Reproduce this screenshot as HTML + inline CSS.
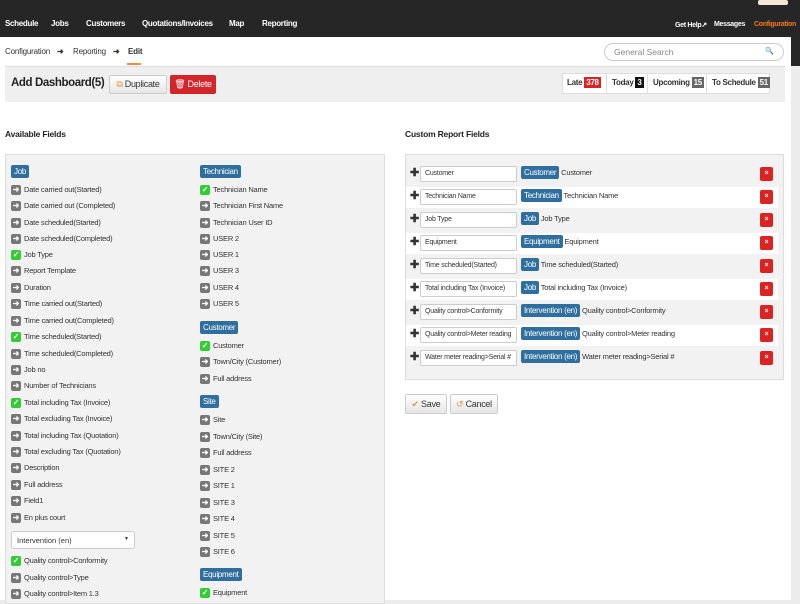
<!DOCTYPE html>
<html><head><style>
*{box-sizing:border-box;margin:0;padding:0}
body{width:800px;height:600px;overflow:hidden;background:#ececec;font-family:"Liberation Sans",sans-serif;position:relative}
.a{position:absolute}
#top{left:0;top:0;width:800px;height:66px;background:#262626}
#page{left:0;top:37px;width:791px;height:563px;background:#fff}
.nav{color:#fff;font-weight:bold;font-size:8px;top:19px;letter-spacing:-0.3px}
.bc{font-size:8px;color:#333;top:47px;letter-spacing:-0.2px}
.lbl{background:#2f6f9f;color:#fff;font-size:8px;padding:2px 3px;border-radius:2px;line-height:9px;letter-spacing:-0.3px}
.it{font-size:7.5px;color:#333;line-height:11px;white-space:nowrap;letter-spacing:-0.2px}
.ic{display:inline-block;width:10px;height:10px;border-radius:2px;background:#777;color:#fff;font-size:8px;line-height:10px;text-align:center;vertical-align:middle;margin-right:3px;font-weight:bold}
.ck{background:#3c3}
.row{left:406px;width:372px;height:21px}
.inp{position:absolute;left:14px;top:2px;width:97px;height:16px;background:#fff;border:1px solid #ccc;border-radius:2px;font-size:7px;color:#333;padding-left:4px;line-height:14px;white-space:nowrap;overflow:hidden;letter-spacing:-0.2px}
.x{position:absolute;left:354px;top:3px;width:13px;height:14px;background:#d22;border-radius:2px;color:#fff;font-size:7px;text-align:center;line-height:14px;font-weight:bold}
.pl{position:absolute;left:4px;top:3px;font-size:11px;font-weight:bold;color:#333;line-height:13px}
.rl{position:absolute;left:115px;top:4px;font-size:7.5px;color:#333;white-space:nowrap;letter-spacing:-0.2px}
.btn{background:linear-gradient(#fff,#e6e6e6);border:1px solid #ccc;border-radius:2px;font-size:9px;color:#333;text-align:center;letter-spacing:-0.3px}
.cnt{font-size:8px;color:#333;top:78px;font-weight:bold;letter-spacing:-0.3px}
.n{color:#fff;padding:1px 2px;font-size:8px}
</style></head><body>
<div class="a" id="top"></div>
<div class="a" style="left:758px;top:0;width:30px;height:5px;background:#f4e7d8;border-radius:2px"></div>
<div class="a nav" style="left:5px">Schedule</div>
<div class="a nav" style="left:51px">Jobs</div>
<div class="a nav" style="left:86px">Customers</div>
<div class="a nav" style="left:142px">Quotations/Invoices</div>
<div class="a nav" style="left:229px">Map</div>
<div class="a nav" style="left:262px">Reporting</div>
<div class="a nav" style="left:675px;font-size:7px;top:21px">Get Help↗</div>
<div class="a nav" style="left:714px;font-size:7px;top:21px">Messages</div>
<div class="a nav" style="left:754px;font-size:7px;top:21px;color:#f07a1a">Configuration</div>
<div class="a" id="page"></div>
<div class="a bc" style="left:5px">Configuration</div>
<div class="a bc" style="left:57px;font-weight:bold">➜</div>
<div class="a bc" style="left:73px">Reporting</div>
<div class="a bc" style="left:113px;font-weight:bold">➜</div>
<div class="a bc" style="left:128px;font-weight:bold">Edit</div>
<div class="a" style="left:127px;top:63px;width:14px;height:2px;background:#e8913c"></div>
<div class="a" style="left:604px;top:43px;width:180px;height:18px;border:1px solid #ccc;border-radius:9px;font-size:8.5px;color:#888;padding:3px 9px">General Search<span style="float:right;font-size:7px">🔍</span></div>
<div class="a" style="left:5px;top:66px;width:780px;height:36px;background:#efefef;border-top:1px solid #ddd"></div>
<div class="a" style="left:11px;top:77px;font-size:11.5px;font-weight:bold;color:#222;letter-spacing:-0.4px">Add Dashboard(5)</div>
<div class="a btn" style="left:109px;top:75px;width:58px;height:19px;line-height:17px"><span style="color:#e8913c">⧉</span> Duplicate</div>
<div class="a" style="left:170px;top:75px;width:46px;height:19px;background:#d3262b;border-radius:2px;color:#fff;font-size:9px;line-height:19px;text-align:center;letter-spacing:-0.3px">🗑 Delete</div>
<div class="a" style="left:562px;top:73px;width:208px;height:21px;background:#fff;border:1px solid #ddd"></div>
<div class="a" style="left:606px;top:73px;width:1px;height:21px;background:#ddd"></div>
<div class="a" style="left:647px;top:73px;width:1px;height:21px;background:#ddd"></div>
<div class="a" style="left:706px;top:73px;width:1px;height:21px;background:#ddd"></div>
<div class="a cnt" style="left:567px">Late <span class="n" style="background:#d22">378</span></div>
<div class="a cnt" style="left:612px">Today <span class="n" style="background:#111">3</span></div>
<div class="a cnt" style="left:653px">Upcoming <span class="n" style="background:#666">15</span></div>
<div class="a cnt" style="left:712px">To Schedule <span class="n" style="background:#666">51</span></div>
<div class="a" style="left:5px;top:129px;font-size:8.5px;font-weight:bold;color:#222;letter-spacing:-0.2px">Available Fields</div>
<div class="a" style="left:405px;top:129px;font-size:8.5px;font-weight:bold;color:#222;letter-spacing:-0.2px">Custom Report Fields</div>
<div class="a" style="left:5px;top:154px;width:380px;height:450px;background:#f2f2f2;border:1px solid #ddd"></div>
<div class="a" style="left:405px;top:154px;width:379px;height:226px;background:#f2f2f2;border:1px solid #ddd"></div>

<div class="a lbl" style="left:11px;top:165px">Job</div>
<div class="a it" style="left:11px;top:184px"><span class="ic">➜</span>Date carried out(Started)</div>
<div class="a it" style="left:11px;top:200px"><span class="ic">➜</span>Date carried out (Completed)</div>
<div class="a it" style="left:11px;top:217px"><span class="ic">➜</span>Date scheduled(Started)</div>
<div class="a it" style="left:11px;top:233px"><span class="ic">➜</span>Date scheduled(Completed)</div>
<div class="a it" style="left:11px;top:249px"><span class="ic ck">✓</span>Job Type</div>
<div class="a it" style="left:11px;top:265px"><span class="ic">➜</span>Report Template</div>
<div class="a it" style="left:11px;top:282px"><span class="ic">➜</span>Duration</div>
<div class="a it" style="left:11px;top:298px"><span class="ic">➜</span>Time carried out(Started)</div>
<div class="a it" style="left:11px;top:315px"><span class="ic">➜</span>Time carried out(Completed)</div>
<div class="a it" style="left:11px;top:331px"><span class="ic ck">✓</span>Time scheduled(Started)</div>
<div class="a it" style="left:11px;top:348px"><span class="ic">➜</span>Time scheduled(Completed)</div>
<div class="a it" style="left:11px;top:364px"><span class="ic">➜</span>Job no</div>
<div class="a it" style="left:11px;top:380px"><span class="ic">➜</span>Number of Technicians</div>
<div class="a it" style="left:11px;top:397px"><span class="ic ck">✓</span>Total including Tax (Invoice)</div>
<div class="a it" style="left:11px;top:413px"><span class="ic">➜</span>Total excluding Tax (Invoice)</div>
<div class="a it" style="left:11px;top:430px"><span class="ic">➜</span>Total including Tax (Quotation)</div>
<div class="a it" style="left:11px;top:446px"><span class="ic">➜</span>Total excluding Tax (Quotation)</div>
<div class="a it" style="left:11px;top:462px"><span class="ic">➜</span>Description</div>
<div class="a it" style="left:11px;top:479px"><span class="ic">➜</span>Full address</div>
<div class="a it" style="left:11px;top:495px"><span class="ic">➜</span>Field1</div>
<div class="a it" style="left:11px;top:512px"><span class="ic">➜</span>En plus court</div>
<div class="a" style="left:11px;top:531px;width:124px;height:18px;background:#fff;border:1px solid #ccc;border-radius:3px;font-size:7.5px;color:#333;padding:4px 5px">Intervention (en)<span style="float:right;font-size:5px">▼</span></div>
<div class="a it" style="left:11px;top:555px"><span class="ic ck">✓</span>Quality control&gt;Conformity</div>
<div class="a it" style="left:11px;top:572px"><span class="ic">➜</span>Quality control&gt;Type</div>
<div class="a it" style="left:11px;top:588px"><span class="ic">➜</span>Quality control&gt;Item 1.3</div>

<div class="a lbl" style="left:200px;top:165px">Technician</div>
<div class="a it" style="left:200px;top:184px"><span class="ic ck">✓</span>Technician Name</div>
<div class="a it" style="left:200px;top:200px"><span class="ic">➜</span>Technician First Name</div>
<div class="a it" style="left:200px;top:217px"><span class="ic">➜</span>Technician User ID</div>
<div class="a it" style="left:200px;top:233px"><span class="ic">➜</span>USER 2</div>
<div class="a it" style="left:200px;top:249px"><span class="ic">➜</span>USER 1</div>
<div class="a it" style="left:200px;top:265px"><span class="ic">➜</span>USER 3</div>
<div class="a it" style="left:200px;top:282px"><span class="ic">➜</span>USER 4</div>
<div class="a it" style="left:200px;top:298px"><span class="ic">➜</span>USER 5</div>
<div class="a lbl" style="left:200px;top:321px">Customer</div>
<div class="a it" style="left:200px;top:340px"><span class="ic ck">✓</span>Customer</div>
<div class="a it" style="left:200px;top:356px"><span class="ic">➜</span>Town/City (Customer)</div>
<div class="a it" style="left:200px;top:373px"><span class="ic">➜</span>Full address</div>
<div class="a lbl" style="left:200px;top:395px">Site</div>
<div class="a it" style="left:200px;top:414px"><span class="ic">➜</span>Site</div>
<div class="a it" style="left:200px;top:431px"><span class="ic">➜</span>Town/City (Site)</div>
<div class="a it" style="left:200px;top:447px"><span class="ic">➜</span>Full address</div>
<div class="a it" style="left:200px;top:464px"><span class="ic">➜</span>SITE 2</div>
<div class="a it" style="left:200px;top:480px"><span class="ic">➜</span>SITE 1</div>
<div class="a it" style="left:200px;top:497px"><span class="ic">➜</span>SITE 3</div>
<div class="a it" style="left:200px;top:513px"><span class="ic">➜</span>SITE 4</div>
<div class="a it" style="left:200px;top:530px"><span class="ic">➜</span>SITE 5</div>
<div class="a it" style="left:200px;top:546px"><span class="ic">➜</span>SITE 6</div>
<div class="a lbl" style="left:200px;top:568px">Equipment</div>
<div class="a it" style="left:200px;top:587px"><span class="ic ck">✓</span>Equipment</div>

<div class="a row" style="top:164px"><span class="pl">✚</span><div class="inp">Customer</div><span class="rl"><span class="lbl">Customer</span> Customer</span><div class="x">×</div></div>
<div class="a row" style="top:187px;background:#fff"><span class="pl">✚</span><div class="inp">Technician Name</div><span class="rl"><span class="lbl">Technician</span> Technician Name</span><div class="x">×</div></div>
<div class="a row" style="top:210px"><span class="pl">✚</span><div class="inp">Job Type</div><span class="rl"><span class="lbl">Job</span> Job Type</span><div class="x">×</div></div>
<div class="a row" style="top:233px;background:#fff"><span class="pl">✚</span><div class="inp">Equipment</div><span class="rl"><span class="lbl">Equipment</span> Equipment</span><div class="x">×</div></div>
<div class="a row" style="top:256px"><span class="pl">✚</span><div class="inp">Time scheduled(Started)</div><span class="rl"><span class="lbl">Job</span> Time scheduled(Started)</span><div class="x">×</div></div>
<div class="a row" style="top:279px;background:#fff"><span class="pl">✚</span><div class="inp">Total including Tax (Invoice)</div><span class="rl"><span class="lbl">Job</span> Total including Tax (Invoice)</span><div class="x">×</div></div>
<div class="a row" style="top:302px"><span class="pl">✚</span><div class="inp">Quality control&gt;Conformity</div><span class="rl"><span class="lbl">Intervention (en)</span> Quality control&gt;Conformity</span><div class="x">×</div></div>
<div class="a row" style="top:325px;background:#fff"><span class="pl">✚</span><div class="inp">Quality control&gt;Meter reading</div><span class="rl"><span class="lbl">Intervention (en)</span> Quality control&gt;Meter reading</span><div class="x">×</div></div>
<div class="a row" style="top:348px"><span class="pl">✚</span><div class="inp">Water meter reading&gt;Serial #</div><span class="rl"><span class="lbl">Intervention (en)</span> Water meter reading&gt;Serial #</span><div class="x">×</div></div>

<div class="a btn" style="left:405px;top:394px;width:42px;height:20px;line-height:18px"><span style="color:#e8913c">✔</span> Save</div>
<div class="a btn" style="left:450px;top:394px;width:48px;height:20px;line-height:18px"><span style="color:#e8913c">↺</span> Cancel</div>
</body></html>
